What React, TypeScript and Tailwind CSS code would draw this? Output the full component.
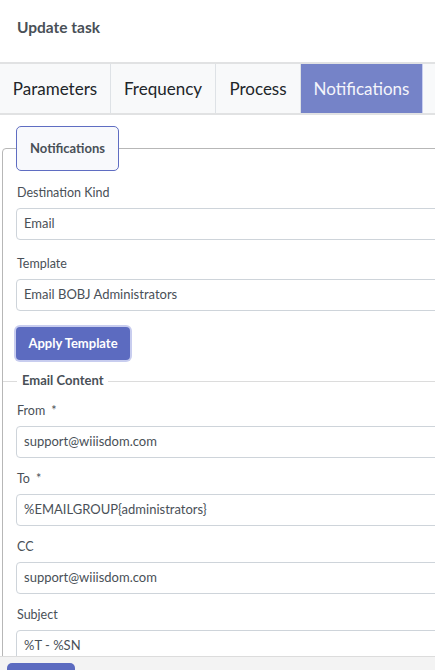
import React from "react";

const font = { fontFamily: "Lato, 'Noto Sans', sans-serif" };

function Field({ label, value, required, mb }: { label: string; value: string; required?: boolean; mb: string }) {
  return (
    <div className={`flex flex-col ${mb}`}>
      <div className="h-[20px] leading-[20px] text-[12.5px] text-[#495057] pl-[1px]">
        {label}
        {required ? <span className="ml-[6px]">*</span> : null}
      </div>
      <div className="mt-[5px] h-[32px] w-full border border-[#ced4da] rounded-[4px] bg-white flex items-center pl-[7px] text-[13px] text-[#495057]">
        {value}
      </div>
    </div>
  );
}

export default function App() {
  const tabs = [
    { name: "Parameters", w: "w-[111px]" },
    { name: "Frequency", w: "w-[105px]" },
    { name: "Process", w: "w-[85px]" },
  ];
  return (
    <div className="w-[435px] h-[670px] overflow-hidden bg-white flex flex-col relative" style={font}>
      <div className="h-[62px] shrink-0 pl-[17px] pt-[17px]">
        <div className="leading-[20px] text-[15.5px] font-bold text-[#495057]">Update task</div>
      </div>
      <div className="shrink-0 h-[53px] border-y-2 border-[#e1e2e3] bg-[#f8f9fa] flex">
        {tabs.map((t) => (
          <div
            key={t.name}
            className={`${t.w} shrink-0 border-r border-[#dee2e6] flex items-center justify-center text-[17px] text-[#212529]`}
          >
            {t.name}
          </div>
        ))}
        <div className="w-[122px] shrink-0 bg-[#7583c8] border-r border-[#c9cff0] flex items-center justify-center text-[17px] text-[#f4f5fb]">
          Notifications
        </div>
        <div className="flex-1 bg-[#f8f9fa]" />
      </div>
      <div className="flex-1 overflow-hidden">
        <fieldset className="ml-[2px] mt-[11px] w-[560px] border border-[#b7b7b7] rounded-[4px] px-[13px] pb-[20px]">
          <legend className="w-[103px] h-[45px] border border-[#5f6dc2] rounded-[5px] bg-[#f8f9fc] flex items-center justify-center text-[13px] font-bold text-[#495057]">
            Notifications
          </legend>
          <div className="mt-[12px]">
            <Field label="Destination Kind" value="Email" mb="mb-[14px]" />
            <Field label="Template" value="Email BOBJ Administrators" mb="mb-[16px]" />
            <div className="flex">
              <div className="w-[114px] h-[33px] rounded-[4px] bg-[#5c6bc0] shadow-[0_0_0_2px_#c8cdef] flex items-center justify-center text-[13px] font-bold text-white">
                Apply Template
              </div>
            </div>
          </div>
          <div className="mt-[11px] -ml-[13px] flex items-center h-[20px]">
            <div className="w-[14px] h-px bg-[#dcdcdc]" />
            <div className="px-[5px] text-[13px] font-bold text-[#495057]">Email Content</div>
            <div className="flex-1 h-px bg-[#dcdcdc]" />
          </div>
          <div className="mt-[10px]">
            <Field label="From" required value="support@wiiisdom.com" mb="mb-[11px]" />
            <Field label="To" required value="%EMAILGROUP{administrators}" mb="mb-[11px]" />
            <Field label="CC" value="support@wiiisdom.com" mb="mb-[11px]" />
            <Field label="Subject" value="%T - %SN" mb="mb-[11px]" />
          </div>
        </fieldset>
      </div>
      <div className="absolute left-0 right-0 top-[656px] h-[14px] bg-[#f3f3f3] border-t border-[#dcdcdc] pl-[7px] pt-[6px]">
        <div className="w-[68px] h-[20px] bg-[#5c6bc0] rounded-t-[5px]" />
      </div>
    </div>
  );
}
